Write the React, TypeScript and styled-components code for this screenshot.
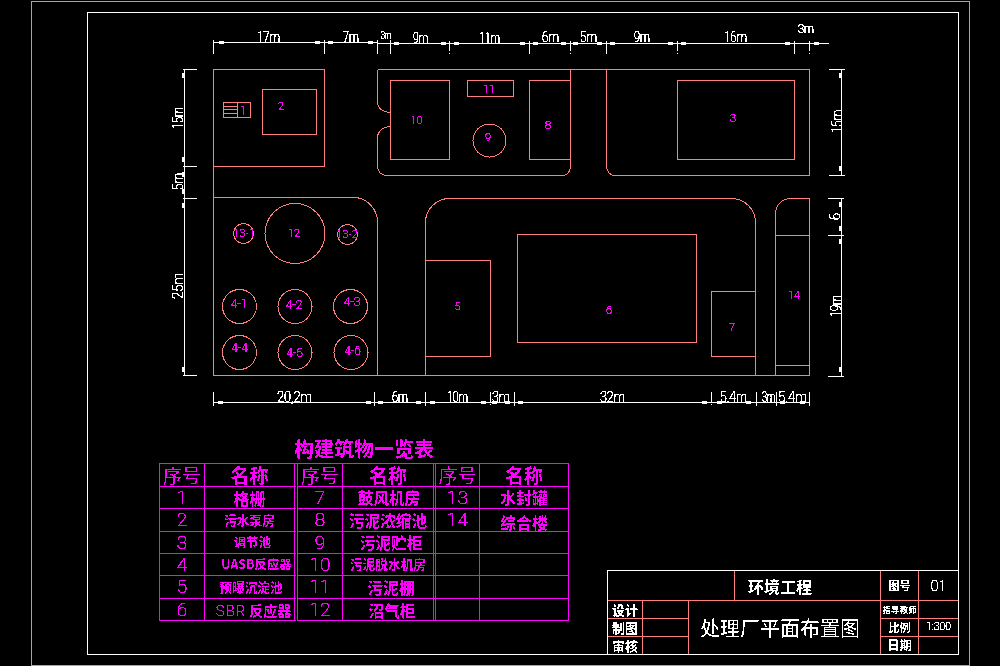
import { Fragment } from "react";
import styled, { createGlobalStyle } from "styled-components";

const SALMON = "#ff7f7f";
const MAGENTA = "#ff00ff";
const CJK = `"Noto Sans CJK SC", "Liberation Sans", sans-serif`;
const THIN = `Roboto, "Liberation Sans", sans-serif`;

type Box = [number, number, number, number];

const rooms: Box[] = [
  [213, 69, 324, 166],
  [262, 89, 316, 134],
  [223, 102, 250, 117],
  [390, 80, 449, 159],
  [467, 80, 513, 96],
  [529, 80, 570, 159],
  [677, 80, 794, 159],
  [425, 260, 490, 356],
  [517, 234, 696, 342],
  [711, 291, 755, 356],
];

const walls = [
  "M377 69 H809 V175 H615 A8.5 9 0 0 1 606 166 V69",
  "M377 69 V102 A13 10 0 0 0 390 112",
  "M390 126 A13 11 0 0 0 377 137 V166 A9 9 0 0 0 386 175 H562 A8 9 0 0 0 570 166 V69",
  "M213 166 V375 H809",
  "M213 197 H353 A24 25 0 0 1 377 222 V375",
  "M425 375 V222 A24 24 0 0 1 449 198 H732 A24 24 0 0 1 755 222 V375",
  "M775 375 V213 A15 15 0 0 1 790 198 H809 V375",
  "M775 235 H809",
  "M775 365 H809",
  "M237 102 V117",
  "M223 106 H237",
  "M223 109 H237",
  "M223 113 H237",
];

const tanks: [number, number, number][] = [
  [489, 140, 16.5],
  [243, 233, 10],
  [294.5, 233, 30],
  [347, 234, 10],
  [239, 306, 17],
  [294.5, 306, 17],
  [350, 306, 17],
  [239, 352, 17],
  [294.5, 352, 17],
  [350.5, 352, 17],
];

const tags: [number, number, string, number][] = [
  [243, 115, "1", 12],
  [281, 110, "2", 11],
  [416.5, 124, "10", 11],
  [489, 93, "11", 11],
  [488, 141, "9", 11],
  [548, 129, "8", 11],
  [733, 122, "3", 11],
  [244, 237, "13-1", 11],
  [294, 237, "12", 11],
  [347, 238, "13-2", 11],
  [239, 308, "4-1", 12],
  [294, 309, "4-2", 12],
  [352, 306, "4-3", 12],
  [239.5, 352, "4-4", 12],
  [294.5, 357, "4-5", 12],
  [352.5, 355, "4-6", 12],
  [457.5, 310, "5", 11],
  [609, 314, "6", 11],
  [732, 331, "7", 11],
  [794, 299, "14", 11],
];

// x, baseline, text, drawn width, font size
const dimTexts: [number, number, string, number, number][] = [
  [257, 42, "17m", 23, 15],
  [343, 42, "7m", 16, 15],
  [381, 39, "3m", 10, 10],
  [413, 43, "9m", 15, 15],
  [479, 43, "11m", 21, 15],
  [542, 42, "6m", 17, 15],
  [580, 42, "5m", 17, 15],
  [634, 42, "9m", 16, 15],
  [724, 42, "16m", 23, 15],
  [798, 33, "3m", 16, 13],
  [277, 402, "20,2m", 35, 15],
  [392, 402, "6m", 16, 15],
  [447, 402, "10m", 21, 15],
  [492, 402, "3m", 18, 15],
  [600, 402, "32m", 25, 15],
  [720, 402, "5.4m", 27, 15],
  [762, 402, "3m", 13, 15],
  [778, 402, "5.4m", 29, 15],
];

// pivot x (baseline), start y (bottom), text, drawn length, font size
const sideTexts: [number, number, string, number, number][] = [
  [183, 129, "15m", 22, 15],
  [183, 190, "5m", 17, 15],
  [183, 299, "25m", 26, 15],
  [842, 133, "15m", 23, 15],
  [840, 220, "6", 7, 14],
  [841, 317, "19m", 22, 15],
];

const dimLines: Box[] = [
  [213, 42, 377, 42],
  [377, 43, 828, 43],
  [213, 402, 809, 402],
  [184, 69, 184, 375],
  [841, 69, 841, 175],
  [841, 198, 841, 376],
  [182, 69, 196, 69],
  [182, 166, 196, 166],
  [182, 198, 196, 198],
  [182, 375, 196, 375],
  [828, 69, 844, 69],
  [828, 175, 844, 175],
  [827, 198, 843, 198],
  [827, 235, 843, 235],
  [827, 376, 843, 376],
];

const topTicks = [213, 324, 377, 390, 449, 529, 570, 606, 677, 794, 809];
const bottomTicks = [213, 374, 425, 490, 514, 711, 756, 776, 809];

const hArrows: [number, number][] = [
  ...[219, 315, 328, 368].map((x): [number, number] => [x, 41]),
  ...[394, 441, 454, 520, 533, 561, 573, 597, 610, 668, 681, 785, 814].map((x): [number, number] => [x, 42]),
  ...[218, 366, 378, 416, 430, 481, 492, 505, 518, 702, 717, 746, 780, 800].map((x): [number, number] => [x, 401]),
];

const vArrows: [number, number][] = [
  ...[73, 157, 172, 189, 203, 367].map((y): [number, number] => [182, y]),
  ...[73, 166, 202, 226, 239, 367].map((y): [number, number] => [839, y]),
];

type Row = [string, string, number, number, number];

// seq, name, font size, nudge left, nudge top
const rows: { a: Row; b: Row; c: Row }[] = [
  { a: ["1", "格栅", 16, 0, 0], b: ["7", "鼓风机房", 15.6, 2, 0], c: ["13", "水封罐", 15.8, 0, 0] },
  { a: ["2", "污水泵房", 12.7, 0, 0], b: ["8", "污泥浓缩池", 15.6, 0, 2], c: ["14", "综合楼", 15.8, 0, 5] },
  { a: ["3", "调节池", 12.3, 6, 0], b: ["9", "污泥贮柜", 15.7, 6, 1], c: ["", "", 14, 0, 0] },
  { a: ["4", "UASB反应器", 12.4, 14, 0], b: ["10", "污泥脱水机房", 12.7, 0, 0], c: ["", "", 14, 0, 0] },
  { a: ["5", "预曝沉淀池", 12.7, 3, 0], b: ["11", "污泥棚", 15.8, 6, 2], c: ["", "", 14, 0, 0] },
  { a: ["6", "SBR反应器", 14, 8, 2], b: ["12", "沼气柜", 15.6, 8, 2], c: ["", "", 14, 0, 0] },
];

const GlobalStyle = createGlobalStyle`
  html, body {
    margin: 0;
    padding: 0;
    background: #000;
    overflow: hidden;
  }
`;

const Sheet = styled.div`
  box-sizing: border-box;
  display: flex;
  width: 939px;
  height: 665px;
  margin: 1px 0 0 31px;
  padding: 10px 10px 10px 55px;
  border: 1px solid ${SALMON};
`;

const Frame = styled.div`
  box-sizing: border-box;
  flex: 1;
  display: flex;
  flex-direction: column;
  border: 1px solid #fff;
`;

const Plan = styled.svg`
  display: block;
  flex: none;
  width: 700px;
  height: 400px;
  margin: 7px 0 0 72px;
`;

const Wall = styled.path`
  fill: none;
  stroke: ${SALMON};
  stroke-width: 1;
  shape-rendering: crispEdges;
`;

const Room = styled.rect`
  fill: none;
  stroke: ${SALMON};
  shape-rendering: crispEdges;
`;

const Tank = styled.circle`
  fill: none;
  stroke: ${SALMON};
  shape-rendering: crispEdges;
`;

const DimLine = styled.line<{ $broken?: boolean }>`
  stroke: #fff;
  shape-rendering: crispEdges;
  ${(p) => p.$broken && "stroke-dasharray: 10 2 1 2;"}
`;

const Arrow = styled.rect`
  fill: #fff;
  shape-rendering: crispEdges;
`;

const Tag = styled.text`
  fill: ${MAGENTA};
  font-family: ${THIN};
  font-weight: 100;
  text-anchor: middle;
`;

const DimText = styled.text`
  fill: #fff;
  font-family: ${THIN};
  font-weight: 100;
`;

const Lower = styled.div`
  flex: 1;
  display: flex;
  justify-content: space-between;
  padding: 16px 0 0 71px;
`;

const Schedule = styled.div`
  width: 410px;
  color: ${MAGENTA};
`;

const ScheduleTitle = styled.div`
  height: 27px;
  font: 700 20px/26px ${CJK};
  text-align: center;
  filter: url(#crisp);
`;

const ScheduleGrid = styled.div`
  box-sizing: border-box;
  display: grid;
  grid-template-columns: 45px 93px 45px 93px 44px 89px;
  grid-template-rows: 23px 22px 23px 22px 22px 23px 22px;
  height: 158px;
  border-top: 1px solid ${MAGENTA};
  border-left: 1px solid ${MAGENTA};
`;

const Cell = styled.div<{ $gap?: number }>`
  box-sizing: border-box;
  display: flex;
  align-items: center;
  justify-content: center;
  border-bottom: 1px solid ${MAGENTA};
  border-right: ${(p) => (p.$gap ? `${p.$gap}px double ${MAGENTA}` : `1px solid ${MAGENTA}`)};
`;

const CrispText = styled.span`
  display: block;
  white-space: nowrap;
  filter: url(#crisp);
`;

const Heading = styled(CrispText)<{ $weight: number }>`
  font: ${(p) => p.$weight} 19px/20px ${CJK};
`;

const Seq = styled(CrispText)`
  font: 100 19px/20px ${THIN};
  filter: url(#crispThin);
`;

const Name = styled(CrispText)<{ $size: number; $left: number; $top: number }>`
  font: 700 ${(p) => p.$size}px/1 ${CJK};
  padding: ${(p) => p.$top}px 0 0 ${(p) => p.$left}px;
`;

const ThinLatin = styled.span`
  margin-right: 3px;
  font: 100 15px/1 ${THIN};
  letter-spacing: 1px;
  filter: url(#crispThin);
`;

const TitleBlock = styled.div`
  box-sizing: border-box;
  align-self: flex-end;
  display: grid;
  grid-template-columns: 35px 46px 46px 146px 38px 39px;
  grid-template-rows: 30px 18px 18px 17px;
  width: 351px;
  height: 84px;
  border-top: 1px solid #fff;
  border-left: 1px solid #fff;
  color: #fff;
`;

const TitleCell = styled.div<{ $col: string; $row: string; $open?: "right" | "bottom" | "both"; $start?: number }>`
  box-sizing: border-box;
  grid-column: ${(p) => p.$col};
  grid-row: ${(p) => p.$row};
  display: flex;
  align-items: center;
  justify-content: ${(p) => (p.$start !== undefined ? "flex-start" : "center")};
  padding-left: ${(p) => p.$start ?? 0}px;
  border-right: ${(p) => (p.$open === "right" || p.$open === "both" ? "none" : `1px solid ${SALMON}`)};
  border-bottom: ${(p) => (p.$open === "bottom" || p.$open === "both" ? "none" : `1px solid ${SALMON}`)};
`;

const TitleText = styled(CrispText)<{ $size: number; $weight?: number }>`
  font: ${(p) => p.$weight ?? 700} ${(p) => p.$size}px/1 ${CJK};
`;

const TitleNumber = styled(CrispText)<{ $size: number }>`
  font: 100 ${(p) => p.$size}px/1 ${THIN};
  filter: url(#crispThin);
`;

const Filters = styled.svg`
  position: absolute;
  width: 0;
  height: 0;
`;

function CrispFilters() {
  return (
    <Filters aria-hidden="true">
      <defs>
        <filter id="crisp" colorInterpolationFilters="sRGB" x="-5%" y="-5%" width="110%" height="110%">
          <feComponentTransfer>
            <feFuncA type="discrete" tableValues="0 1" />
          </feComponentTransfer>
        </filter>
        <filter id="crispThin" colorInterpolationFilters="sRGB" x="-5%" y="-5%" width="110%" height="110%">
          <feComponentTransfer>
            <feFuncA type="discrete" tableValues="0 1 1 1 1 1 1 1" />
          </feComponentTransfer>
        </filter>
      </defs>
    </Filters>
  );
}

function SitePlan() {
  return (
    <Plan viewBox="160 20 700 400">
      <g transform="translate(.5 .5)">
        {walls.map((d) => (
          <Wall key={d} d={d} />
        ))}
        {rooms.map(([x1, y1, x2, y2]) => (
          <Room key={`${x1}-${y1}`} x={x1} y={y1} width={x2 - x1} height={y2 - y1} />
        ))}
        {tanks.map(([cx, cy, r]) => (
          <Tank key={`${cx}-${cy}`} cx={cx} cy={cy} r={r} />
        ))}
        {dimLines.map(([x1, y1, x2, y2]) => (
          <DimLine key={`${x1}-${y1}-${x2}-${y2}`} x1={x1} y1={y1} x2={x2} y2={y2} />
        ))}
        {topTicks.map((x, i) => (
          <DimLine key={x} x1={x} y1={i < 4 ? 39 : 40} x2={x} y2={53} $broken={[449, 570, 677, 809].includes(x)} />
        ))}
        {bottomTicks.map((x) => (
          <DimLine key={x} x1={x} y1={391} x2={x} y2={405} $broken={x === 490 || x === 711} />
        ))}
        {hArrows.map(([x, y]) => (
          <Arrow key={`${x}-${y}`} x={x - 0.5} y={y - 0.5} width={5} height={3} />
        ))}
        {vArrows.map(([x, y]) => (
          <Arrow key={`${x}-${y}`} x={x - 0.5} y={y - 0.5} width={3} height={5} />
        ))}
      </g>
      <g filter="url(#crispThin)">
        {tags.map(([x, y, text, size]) => (
          <Tag key={text} x={x} y={y} fontSize={size}>
            {text}
          </Tag>
        ))}
        {dimTexts.map(([x, y, text, width, size]) => (
          <DimText key={`${x}-${text}`} x={x} y={y} fontSize={size} textLength={width} lengthAdjust="spacingAndGlyphs">
            {text}
          </DimText>
        ))}
        {sideTexts.map(([x, y, text, length, size]) => (
          <DimText
            key={`${y}-${text}`}
            x={x}
            y={y}
            fontSize={size}
            textLength={length}
            lengthAdjust="spacingAndGlyphs"
            transform={`rotate(-90 ${x} ${y})`}
          >
            {text}
          </DimText>
        ))}
      </g>
    </Plan>
  );
}

function ScheduleGroup({ row, gap }: { row: Row; gap?: number }) {
  const isSbr = row[1].startsWith("SBR");
  return (
    <>
      <Cell>
        <Seq>{row[0]}</Seq>
      </Cell>
      <Cell $gap={gap}>
        <Name $size={row[2]} $left={row[3]} $top={row[4]}>
          {isSbr ? <ThinLatin>SBR</ThinLatin> : null}
          {isSbr ? row[1].slice(3) : row[1]}
        </Name>
      </Cell>
    </>
  );
}

function BuildingSchedule() {
  return (
    <Schedule>
      <ScheduleTitle>构建筑物一览表</ScheduleTitle>
      <ScheduleGrid>
        {[4, 3, 0].map((gap) => (
          <Fragment key={gap}>
            <Cell>
              <Heading $weight={400}>序号</Heading>
            </Cell>
            <Cell $gap={gap || undefined}>
              <Heading $weight={700}>名称</Heading>
            </Cell>
          </Fragment>
        ))}
        {rows.map((row) => (
          <Fragment key={row.a[0]}>
            <ScheduleGroup row={row.a} gap={4} />
            <ScheduleGroup row={row.b} gap={3} />
            <ScheduleGroup row={row.c} />
          </Fragment>
        ))}
      </ScheduleGrid>
    </Schedule>
  );
}

function DrawingTitle() {
  return (
    <TitleBlock>
      <TitleCell $col="1 / 4" $row="1" />
      <TitleCell $col="4" $row="1" $start={13}>
        <TitleText $size={16}>环境工程</TitleText>
      </TitleCell>
      <TitleCell $col="5" $row="1">
        <TitleText $size={11}>图号</TitleText>
      </TitleCell>
      <TitleCell $col="6" $row="1" $open="right">
        <TitleNumber $size={14}>01</TitleNumber>
      </TitleCell>
      <TitleCell $col="1" $row="2">
        <TitleText $size={13}>设计</TitleText>
      </TitleCell>
      <TitleCell $col="2" $row="2" />
      <TitleCell $col="3 / 5" $row="2 / 5" $open="bottom" $start={11}>
        <TitleText $size={20} $weight={400}>处理厂平面布置图</TitleText>
      </TitleCell>
      <TitleCell $col="5" $row="2">
        <TitleText $size={8.5}>指导教师</TitleText>
      </TitleCell>
      <TitleCell $col="6" $row="2" $open="right" />
      <TitleCell $col="1" $row="3">
        <TitleText $size={13}>制图</TitleText>
      </TitleCell>
      <TitleCell $col="2" $row="3" />
      <TitleCell $col="5" $row="3">
        <TitleText $size={11}>比例</TitleText>
      </TitleCell>
      <TitleCell $col="6" $row="3" $open="right">
        <TitleNumber $size={10.5}>1:300</TitleNumber>
      </TitleCell>
      <TitleCell $col="1" $row="4" $open="bottom">
        <TitleText $size={13}>审核</TitleText>
      </TitleCell>
      <TitleCell $col="2" $row="4" $open="bottom" />
      <TitleCell $col="5" $row="4" $open="bottom">
        <TitleText $size={12.5}>日期</TitleText>
      </TitleCell>
      <TitleCell $col="6" $row="4" $open="both" />
    </TitleBlock>
  );
}

export default function App() {
  return (
    <>
      <GlobalStyle />
      <CrispFilters />
      <Sheet>
        <Frame>
          <SitePlan />
          <Lower>
            <BuildingSchedule />
            <DrawingTitle />
          </Lower>
        </Frame>
      </Sheet>
    </>
  );
}
